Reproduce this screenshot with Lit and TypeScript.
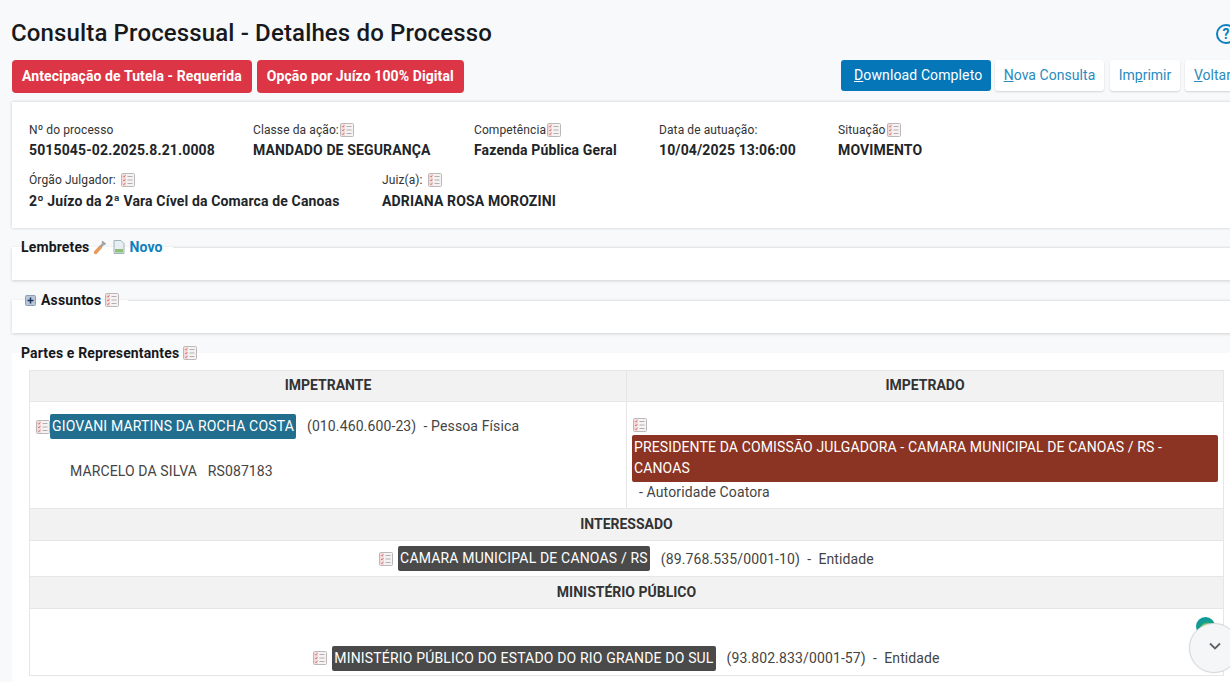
import { LitElement, html, css } from "lit";
import { customElement } from "lit/decorators.js";

const listIcon = html`<svg class="ico" width="14" height="14" viewBox="0 0 14 14">
  <rect x="0.5" y="0.5" width="13" height="13" rx="1" fill="#f6f2f2" stroke="#bdb8b8"/>
  <rect x="1" y="1" width="4" height="12" fill="#f1dcdc"/>
  <path d="M2 3.2l1 1 1.3-2M2 7l1 1 1.3-2M2 10.8l1 1 1.3-2" fill="none" stroke="#d9797b" stroke-width="1"/>
  <path d="M6.5 3.5h5M6.5 7h5M6.5 10.5h5" stroke="#b0b0b4" stroke-width="1"/>
</svg>`;

@customElement("app-root")
export class AppRoot extends LitElement {
  static styles = css`
    :host { display: block; width: 1230px; height: 682px; overflow: hidden; background: #f8f9fa; font-family: Roboto, "Liberation Sans", sans-serif; color: #212529; font-size: 14px; }
    .wrap { position: relative; }
    .page { width: 1260px; padding: 0 0 0 12px; box-sizing: border-box; }
    .titlebar { display: flex; align-items: center; height: 60px; padding-top: 7px; box-sizing: border-box; margin-left: -1px; }
    h1 { margin: 0; font-size: 24px; line-height: 29px; font-weight: 500; color: #17191c; letter-spacing: 0.14px; flex: 1; }
    .help { margin-right: 24px; width: 20px; height: 20px; border: 2px solid #0f7fbd; border-radius: 50%; box-sizing: border-box; color: #0f7fbd; font-size: 14px; font-weight: 700; line-height: 16px; text-align: center; flex: none; }
    .actions { display: flex; align-items: flex-start; height: 42px; }
    .badge { background: #dc3545; color: #fff; font-weight: 700; font-size: 14px; height: 33px; line-height: 32px; border-radius: 4px; padding: 0 10px; margin-right: 5px; letter-spacing: 0.1px; white-space: nowrap; }
    .spacer { flex: 1; }
    .btn { height: 31px; line-height: 30px; box-sizing: border-box; font-size: 14px; border-radius: 3px; white-space: nowrap; background: #fff; color: #2a8bbd; box-shadow: 0 1px 2px rgba(0,0,0,.15); flex: none; }
    .btn.primary { background: #0577b9; color: #fff; box-shadow: none; width: 150px; padding-left: 13px; margin-right: 4px; letter-spacing: 0.12px; }
    .btn.nc { width: 109px; text-align: center; margin-right: 6px; letter-spacing: 0.05px; }
    .btn.imp { width: 70px; text-align: center; margin-right: 5px; }
    .btn.vol { width: 75px; padding-left: 9px; }
    .card { background: #fff; height: 126px; box-sizing: border-box; box-shadow: 0 0 3px rgba(0,0,0,.2); padding: 20px 17px 0; }
    .row { display: flex; }
    .row + .row { margin-top: 12px; }
    .row + .row .v { margin-top: 3px; }
    .f { flex: none; }
    .f .l { font-size: 12px; line-height: 16px; height: 16px; color: #333; display: flex; align-items: center; white-space: nowrap; letter-spacing: 0.1px; }
    .f .l .ico { margin-left: 1px; }
    .f .v { font-size: 14px; font-weight: 700; line-height: 20px; margin-top: 2px; color: #212529; white-space: nowrap; letter-spacing: 0.14px; }
    .ico { display: inline-block; flex: none; }
    .l .gap { margin-left: 4px; }
    fieldset { margin: 0; padding: 0; border: 0; border-top: 1px solid #e4e6e8; background: #fff; box-shadow: 0 1px 3px rgba(0,0,0,.16); min-width: 0; display: block; box-sizing: border-box; }
    legend { font-size: 14px; font-weight: 700; line-height: 18px; padding: 0 9px; color: #17191c; display: flex; align-items: center; height: 18px; white-space: nowrap; letter-spacing: 0.14px; }
    .lemb { margin-top: 10px; height: 42px; }
    .ass { margin-top: 11px; height: 42px; }
    .partes { margin-top: 11px; height: 340px; box-shadow: none; padding: 8px 0 0 0; border-top-color: #fff; }
    legend .ico { margin-left: 4px; }
    legend a { color: #0f7fbd; margin-left: 4px; margin-right: 1px; }
    .wrench { margin-left: 3px; }
    legend .doc { margin-left: 6px; }
    table { border-collapse: collapse; margin-left: 17px; width: 1194px; table-layout: fixed; font-size: 14px; color: #444; }
    th { background: #f2f2f2; font-weight: 700; color: #333; text-align: center; padding: 0 0 1px; height: 32px; box-sizing: border-box; border: 1px solid #e6e6e6; font-size: 14px; }
    tr.first th { height: 31px; padding-bottom: 2px; }
    td { padding: 0; border: 1px solid #e6e6e6; vertical-align: top; background: #fff; }
    .tag { color: #fff; border-radius: 2px; padding: 0 2px; display: inline-block; line-height: 25px; height: 25px; white-space: nowrap; letter-spacing: 0.17px; }
    .teal { background: #216e8f; }
    .dark { background: #4a4a4a; }
    .red { background: #8c3423; color: #fff; border-radius: 2px; padding: 2px 4px 3px 2px; line-height: 21px; margin: 0 5px 0 5px; height: 47px; box-sizing: border-box; letter-spacing: 0.13px; }
    .c1 { height: 107px; padding: 12px 0 0 6px; box-sizing: border-box; }
    .line { display: flex; align-items: center; }
    .mut { margin-left: 11px; letter-spacing: 0.12px; white-space: pre; }
    .line .mut { position: relative; top: -1px; }
    .adv { margin: 22px 0 0 34px; line-height: 20px; white-space: pre; letter-spacing: 0.12px; }
    .c2 { height: 107px; padding: 16px 0 0 0; box-sizing: border-box; }
    .c2 .ico { display: block; margin: 0 0 3px 6px; }
    .aut { margin: 0 0 0 12px; line-height: 20px; letter-spacing: 0.12px; }
    .ctr { display: flex; align-items: center; justify-content: center; white-space: pre; }
    .ctr .ico { margin-right: 5px; }
    .c3 { height: 35px; }
    .c3 .ctr { height: 35px; box-sizing: border-box; }
    .c4 { height: 66px; }
    .c4 .ctr { height: 66px; padding-top: 32px; box-sizing: border-box; }
    .float { position: absolute; left: 1189px; top: 623px; width: 50px; height: 50px; border-radius: 50%; background: #f5f6f8; border: 1px solid #d8d8d8; box-sizing: border-box; box-shadow: 0 0 2px rgba(0,0,0,.1); }
    .float svg { position: absolute; left: 17px; top: 14px; }
    .chat { position: absolute; left: 1196px; top: 617px; width: 19px; height: 19px; border-radius: 50%; background: radial-gradient(circle at 60% 72%, #dbe35c 0 32%, #12a08c 48%, #0a8fa8 100%); }
  `;

  render() {
    return html`
      <div class="wrap">
      <div class="page">
        <div class="titlebar">
          <h1>Consulta Processual - Detalhes do Processo</h1>
          <span class="help">?</span>
        </div>
        <div class="actions">
          <span class="badge">Antecipação de Tutela - Requerida</span>
          <span class="badge">Opção por Juízo 100% Digital</span>
          <span class="spacer"></span>
          <span class="btn primary"><u>D</u>ownload Completo</span>
          <span class="btn nc"><u>N</u>ova Consulta</span>
          <span class="btn imp">Im<u>p</u>rimir</span>
          <span class="btn vol"><u>V</u>oltar</span>
        </div>
        <section class="card">
          <div class="row">
            <div class="f" style="width:224px"><div class="l">Nº do processo</div><div class="v">5015045-02.2025.8.21.0008</div></div>
            <div class="f" style="width:221px"><div class="l">Classe da ação:${listIcon}</div><div class="v">MANDADO DE SEGURANÇA</div></div>
            <div class="f" style="width:185px"><div class="l">Competência${listIcon}</div><div class="v">Fazenda Pública Geral</div></div>
            <div class="f" style="width:179px"><div class="l">Data de autuação:</div><div class="v">10/04/2025 13:06:00</div></div>
            <div class="f"><div class="l">Situação${listIcon}</div><div class="v">MOVIMENTO</div></div>
          </div>
          <div class="row">
            <div class="f" style="width:353px"><div class="l">Órgão Julgador:<span class="gap"></span>${listIcon}</div><div class="v">2º Juízo da 2ª Vara Cível da Comarca de Canoas</div></div>
            <div class="f"><div class="l">Juiz(a):<span class="gap"></span>${listIcon}</div><div class="v">ADRIANA ROSA MOROZINI</div></div>
          </div>
        </section>
        <fieldset class="lemb">
          <legend>Lembretes
            <svg class="ico wrench" width="14" height="15" viewBox="0 0 14 15"><path d="M2.5 12.5L7.5 7" stroke="#e89a5a" stroke-width="3.4" stroke-linecap="round"/><path d="M7.5 7l3-3.5" stroke="#a3a3a3" stroke-width="2.6"/><path d="M9 1.5l3.5 3" stroke="#a3a3a3" stroke-width="2"/></svg>
            <svg class="ico doc" width="12" height="14" viewBox="0 0 12 14"><path d="M1 .5h7l3 3v10H1z" fill="#e8eef2" stroke="#9fb4bd"/><rect x="2" y="9" width="8" height="3.5" fill="#8fc07a"/></svg>
            <a>Novo</a>
          </legend>
        </fieldset>
        <fieldset class="ass">
          <legend>
            <svg class="ico" style="margin:0 5px 0 4px" width="11" height="11" viewBox="0 0 11 11"><rect x=".5" y=".5" width="10" height="10" rx="1" fill="#b9c6d8" stroke="#8d9db3"/><path d="M5.5 2.5v6M2.5 5.5h6" stroke="#1c3560" stroke-width="1.5"/></svg>Assuntos ${listIcon}
          </legend>
        </fieldset>
        <fieldset class="partes">
          <legend>Partes e Representantes ${listIcon}</legend>
          <table>
            <colgroup><col style="width:597px"><col style="width:597px"></colgroup>
            <tr class="first"><th>IMPETRANTE</th><th>IMPETRADO</th></tr>
            <tr>
              <td class="c1">
                <div class="line">${listIcon}<span class="tag teal">GIOVANI MARTINS DA ROCHA COSTA</span><span class="mut">(010.460.600-23)  - Pessoa Física</span></div>
                <div class="adv">MARCELO DA SILVA   RS087183</div>
              </td>
              <td class="c2">
                ${listIcon}
                <div class="red">PRESIDENTE DA COMISSÃO JULGADORA - CAMARA MUNICIPAL DE CANOAS / RS - CANOAS</div>
                <div class="aut">- Autoridade Coatora</div>
              </td>
            </tr>
            <tr><th colspan="2">INTERESSADO</th></tr>
            <tr><td colspan="2" class="c3"><div class="ctr">${listIcon}<span class="tag dark">CAMARA MUNICIPAL DE CANOAS / RS</span><span class="mut">(89.768.535/0001-10)  -  Entidade</span></div></td></tr>
            <tr><th colspan="2">MINISTÉRIO PÚBLICO</th></tr>
            <tr><td colspan="2" class="c4"><div class="ctr">${listIcon}<span class="tag dark">MINISTÉRIO PÚBLICO DO ESTADO DO RIO GRANDE DO SUL</span><span class="mut">(93.802.833/0001-57)  -  Entidade</span></div></td></tr>
          </table>
        </fieldset>
      </div>
      <div class="chat"></div>
      <div class="float"><svg width="16" height="16" viewBox="0 0 16 16"><path d="M3 5.5l5 5 5-5" fill="none" stroke="#5f6368" stroke-width="1.8"/></svg></div>
      </div>
    `;
  }
}
